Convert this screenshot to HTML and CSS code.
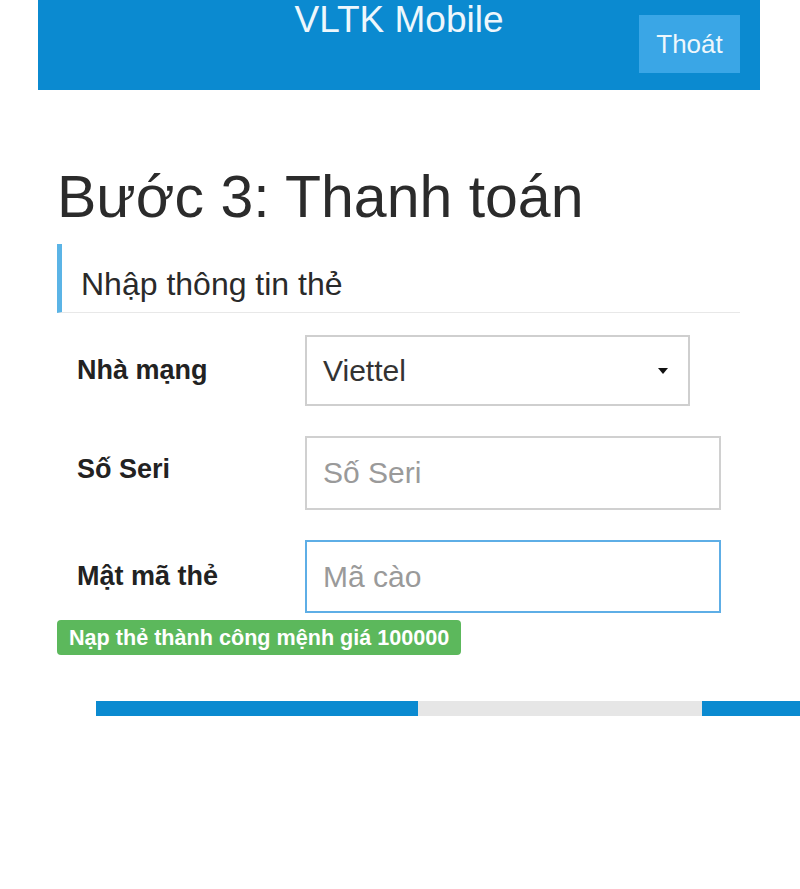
FILE: index.html
```html
<!DOCTYPE html>
<html lang="vi">
<head>
<meta charset="utf-8">
<title>VLTK Mobile</title>
<link rel="stylesheet" href="styles.css">
</head>
<body>
<div class="page">
  <header class="topbar">
    <div class="brand">VLTK Mobile</div>
    <a class="logout">Thoát</a>
  </header>
  <main class="content">
    <h1 class="step-title">Bước 3: Thanh toán</h1>
    <div class="section-title">Nhập thông tin thẻ</div>
    <form class="card-form">
      <div class="form-row row-select">
        <label class="form-label">Nhà mạng</label>
        <div class="select-box">
          <span class="select-value">Viettel</span>
          <span class="caret"></span>
        </div>
      </div>
      <div class="form-row row-serial">
        <label class="form-label">Số Seri</label>
        <div class="text-input"><span class="placeholder">Số Seri</span></div>
      </div>
      <div class="form-row row-code">
        <label class="form-label">Mật mã thẻ</label>
        <div class="text-input focused"><span class="placeholder">Mã cào</span></div>
      </div>
    </form>
    <div class="success-badge">Nạp thẻ thành công mệnh giá 100000</div>
    <div class="action-bar">
      <div class="action action-primary"></div>
      <div class="action action-default"></div>
      <div class="action action-primary action-rest"></div>
    </div>
  </main>
</div>
</body>
</html>
```
FILE: styles.css
```css
html, body {
  margin: 0;
  padding: 0;
  background: #ffffff;
}

body {
  font-family: "Liberation Sans", Arial, sans-serif;
  color: #2a2a2a;
}

.page {
  width: 800px;
  height: 889px;
  overflow: hidden;
}

.topbar {
  margin-left: 38px;
  width: 722px;
  height: 90px;
  background: #0b8ad0;
  display: grid;
  grid-template-columns: 1fr auto 1fr;
  align-items: start;
}

.brand {
  grid-column: 2;
  font-size: 37px;
  line-height: 40px;
  color: #eef7fc;
}

.logout {
  grid-column: 3;
  justify-self: end;
  margin-top: 15px;
  margin-right: 20px;
  width: 101px;
  height: 58px;
  background: #3aa6e6;
  color: #eef7fc;
  font-size: 26px;
  display: flex;
  align-items: center;
  justify-content: center;
}

.content {
  padding-left: 57px;
}

.step-title {
  margin: 74px 0 0 0;
  font-size: 59px;
  line-height: 66px;
  font-weight: normal;
  color: #2b2b2b;
}

.section-title {
  margin-top: 14px;
  width: 659px;
  border-left: 5px solid #5bb4e6;
  border-bottom: 1px solid #e8e8e8;
  padding: 23px 0 10px 19px;
  font-size: 32px;
  line-height: 35px;
  color: #2a2a2a;
}

.card-form {
  margin-top: 22px;
  display: flex;
  flex-direction: column;
  gap: 30px;
}

.form-row {
  display: grid;
  grid-template-columns: 248px auto;
  align-items: center;
}

.form-label {
  padding-left: 20px;
  font-size: 27px;
  font-weight: bold;
  color: #222222;
}

.row-serial .form-label {
  margin-bottom: 8px;
}

.select-box {
  box-sizing: border-box;
  width: 385px;
  height: 71px;
  border: 2px solid #cfcfcf;
  display: flex;
  align-items: center;
  justify-content: space-between;
  padding: 0 20px 0 16px;
  font-size: 30px;
  color: #333333;
}

.caret {
  width: 0;
  height: 0;
  border-left: 5px solid transparent;
  border-right: 5px solid transparent;
  border-top: 6px solid #111111;
}

.text-input {
  box-sizing: border-box;
  width: 416px;
  height: 74px;
  border: 2px solid #d0d0d0;
  display: flex;
  align-items: center;
  padding-left: 16px;
  font-size: 30px;
}

.row-code .text-input {
  height: 73px;
}

.text-input.focused {
  border-color: #5eaee6;
}

.placeholder {
  color: #9a9a9a;
}

.success-badge {
  margin-top: 7px;
  display: inline-block;
  height: 35px;
  line-height: 35px;
  padding: 0 12px;
  background: #5cb85c;
  border-radius: 4px;
  color: #ffffff;
  font-size: 21.6px;
  font-weight: bold;
  white-space: nowrap;
}

.action-bar {
  margin-top: 46px;
  margin-left: 39px;
  display: flex;
  height: 15px;
}

.action {
  flex-shrink: 0;
  height: 15px;
}

.action-primary {
  width: 322px;
  background: #0b8ad0;
}

.action-default {
  width: 284px;
  background: #e6e6e6;
}

.action-rest {
  width: 120px;
}
```
